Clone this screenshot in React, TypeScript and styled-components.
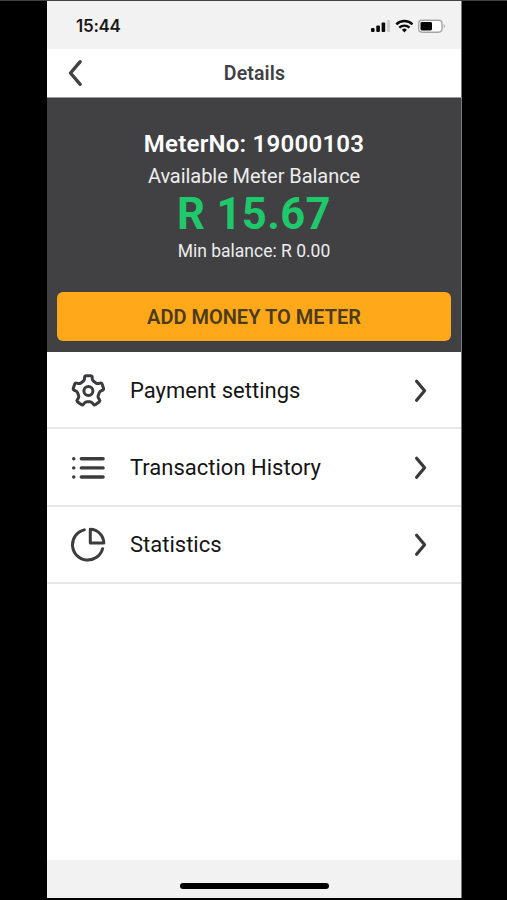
import React from "react";
import styled, { createGlobalStyle } from "styled-components";

const GlobalStyle = createGlobalStyle`
  * { box-sizing: border-box; }
  body { margin: 0; background: #000; font-family: Roboto, "Liberation Sans", sans-serif; }
`;

const Stage = styled.div`
  height: 900px;
  display: flex;
  justify-content: center;
  background: #000;
  border-top: 1px solid #424244;
  padding: 0 45px 2px 47px;
`;

const Phone = styled.main`
  flex: 1;
  display: flex;
  flex-direction: column;
  background: #fff;
  box-shadow: inset -1px 0 #777;
`;

const StatusBar = styled.div`
  height: 48px;
  flex: none;
  display: flex;
  align-items: center;
  justify-content: space-between;
  background: #f2f2f2;
  margin-right: 1px;
  padding: 2px 15px 0 29px;
`;

const Clock = styled.time`
  font: 600 17px/20px Inter, sans-serif;
  letter-spacing: -0.25px;
  color: #171717;
`;

const Header = styled.header`
  height: 49px;
  flex: none;
  display: grid;
  grid-template-columns: 60px 1fr 60px;
  align-items: center;
  border-bottom: 1px solid #999;
`;

const BackButton = styled.button`
  display: flex;
  border: 0;
  padding: 0 0 0 20px;
  background: none;
`;

const Title = styled.h1`
  margin: 0;
  padding-top: 2px;
  text-align: center;
  font-size: 19.5px;
  font-weight: 600;
  line-height: 24px;
  letter-spacing: 0.15px;
  color: #414143;
`;

const Balance = styled.section`
  height: 254px;
  flex: none;
  display: flex;
  flex-direction: column;
  align-items: center;
  background: #414143;
  color: #f2f2f2;
  margin-right: 1px;
  padding: 31px 10px 11px;
`;

const Line = styled.div<{ $size: number; $height: number; $weight?: number; $spacing?: number; $color?: string }>`
  font-size: ${(p) => p.$size}px;
  line-height: ${(p) => p.$height}px;
  font-weight: ${(p) => p.$weight ?? 400};
  letter-spacing: ${(p) => p.$spacing ?? 0}px;
  color: ${(p) => p.$color ?? "#ededed"};
  white-space: nowrap;
`;

const AddButton = styled.button`
  width: 100%;
  height: 49px;
  margin-top: auto;
  border: 0;
  border-radius: 6px;
  background: #ffa91a;
  color: #4b3b1e;
  font: 600 20px/24px Roboto, sans-serif;
`;

const Menu = styled.nav`
  flex: 1;
  display: flex;
  flex-direction: column;
  margin-right: 1px;
`;

const Row = styled.a`
  height: 77.4px;
  display: grid;
  grid-template-columns: 36px 1fr 16px;
  column-gap: 23px;
  align-items: center;
  padding: 2px 32px 0 24px;
  border-bottom: 2px solid #e8e8e8;
  color: #151515;
  font-size: 22px;
  line-height: 28px;
`;

const Footer = styled.footer`
  height: 38px;
  flex: none;
  display: flex;
  justify-content: center;
  background: #f2f2f2;
  margin-right: 1px;
  padding: 23px 0 0 1px;
`;

const HomeBar = styled.div`
  width: 149px;
  height: 6px;
  border-radius: 3px;
  background: #000;
`;

const Chevron = ({ left }: { left?: boolean }) =>
  left ? (
    <svg width="16" height="28" viewBox="0 0 16 28" fill="none" stroke="#414143" strokeWidth="3.4" strokeLinecap="round" strokeLinejoin="round">
      <path d="M13.2 2.7 3.5 14l9.7 11.3" />
    </svg>
  ) : (
    <svg width="16" height="26" viewBox="0 0 16 26" fill="none" stroke="#39393b" strokeWidth="3.2" strokeLinecap="round" strokeLinejoin="round">
      <path d="M3.6 3.2 11.6 12.7 3.6 22.2" />
    </svg>
  );

const Signals = () => (
  <svg width="76" height="18" viewBox="0 0 76 18">
    <g fill="#0b0b0b">
      <rect x="1" y="11" width="3.6" height="4" rx="1" />
      <rect x="6.3" y="8.5" width="3.6" height="6.5" rx="1" />
      <rect x="11.6" y="5.5" width="3.6" height="9.5" rx="1" />
    </g>
    <rect x="16.9" y="3" width="3.2" height="12" rx="1" fill="#cfcfcf" />
    <g fill="none" stroke="#0b0b0b" strokeWidth="2.4">
      <path d="M26.3 7.4a11.4 11.4 0 0 1 16.2 0" />
      <path d="M29.3 10.7a7.2 7.2 0 0 1 10.2 0" />
    </g>
    <path d="M34.4 15.4 31.9 12.8a3.6 3.6 0 0 1 5 0Z" fill="#0b0b0b" />
    <rect x="48.7" y="3.2" width="23.3" height="12" rx="3.4" fill="#fff" stroke="#a5a5a5" strokeWidth="1.4" />
    <rect x="50.5" y="5" width="11.5" height="8.5" rx="1.4" fill="#050505" />
    <path d="M73.6 7.2c1.8.7 1.8 3.3 0 4Z" fill="#aaa" />
  </svg>
);

const polar = (radius: number, degrees: number) => {
  const a = ((degrees - 90) * Math.PI) / 180;
  return [17.4 + radius * Math.cos(a), 17.9 + radius * Math.sin(a)];
};

const gearPoints = [0, 72, 144, 216, 288].flatMap((t) => [
  polar(11.2, t - 21),
  polar(15.6, t - 13.5),
  polar(15.6, t + 13.5),
  polar(11.2, t + 21),
]);

// Rounds every corner of the tooth outline with a quadratic curve.
const gearPath =
  gearPoints
    .map((p, i) => {
      const n = gearPoints.length;
      const prev = gearPoints[(i + n - 1) % n];
      const next = gearPoints[(i + 1) % n];
      const toward = (q: number[]) => {
        const k = 1.5 / Math.hypot(q[0] - p[0], q[1] - p[1]);
        return `${p[0] + (q[0] - p[0]) * k} ${p[1] + (q[1] - p[1]) * k}`;
      };
      return `${i ? "L" : "M"}${toward(prev)} Q${p[0]} ${p[1]} ${toward(next)}`;
    })
    .join(" ") + "Z";

const iconProps = {
  width: 36,
  height: 36,
  viewBox: "0 0 36 36",
  fill: "none",
  stroke: "#3c3c3e",
  strokeWidth: 3,
  strokeLinecap: "round" as const,
  strokeLinejoin: "round" as const,
};

const GearIcon = () => (
  <svg {...iconProps}>
    <path d={gearPath} />
    <circle cx="17.4" cy="17.9" r="4.5" />
  </svg>
);

const ListIcon = () => (
  <svg {...iconProps} strokeWidth={3.4}>
    <path d="M10.3 8.8h21.8M10.3 17.9h21.8M10.3 27h21.8" />
    <path d="M2.7 8.8h.1M2.7 17.9h.1M2.7 27h.1" />
  </svg>
);

const PieIcon = () => (
  <svg {...iconProps}>
    <path d="M13.3 2.9A15.3 15.3 0 1 0 31.6 21.7" />
    <path d="M19.3 2.3V16.1H32.8A13.8 13.8 0 0 0 19.3 2.3Z" />
  </svg>
);

const items = [
  { label: "Payment settings", Icon: GearIcon },
  { label: "Transaction History", Icon: ListIcon },
  { label: "Statistics", Icon: PieIcon },
];

export default function App() {
  return (
    <>
      <GlobalStyle />
      <Stage>
        <Phone>
          <StatusBar>
            <Clock>15:44</Clock>
            <Signals />
          </StatusBar>
          <Header>
            <BackButton aria-label="Back">
              <Chevron left />
            </BackButton>
            <Title>Details</Title>
          </Header>
          <Balance>
            <Line $size={24} $height={31} $weight={600} $spacing={0.25} $color="#fff">MeterNo: 19000103</Line>
            <Line $size={20} $height={32} $spacing={-0.05}>Available Meter Balance</Line>
            <Line $size={43.5} $height={45} $weight={700} $spacing={0.4} $color="#1fc86b">R 15.67</Line>
            <Line $size={17.5} $height={28}>Min balance: R 0.00</Line>
            <AddButton>ADD MONEY TO METER</AddButton>
          </Balance>
          <Menu>
            {items.map(({ label, Icon }) => (
              <Row key={label}>
                <Icon />
                <span>{label}</span>
                <Chevron />
              </Row>
            ))}
          </Menu>
          <Footer>
            <HomeBar />
          </Footer>
        </Phone>
      </Stage>
    </>
  );
}
